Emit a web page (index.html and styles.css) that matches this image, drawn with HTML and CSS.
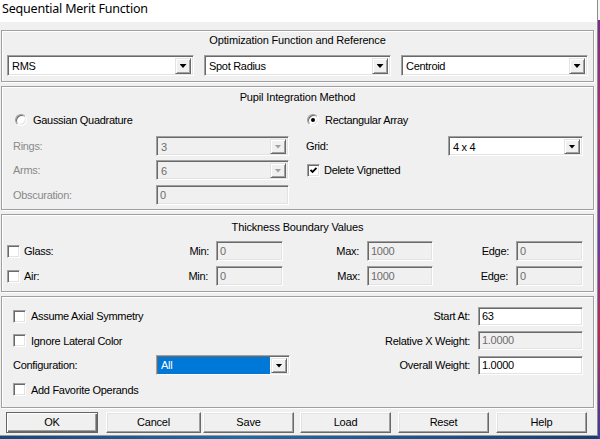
FILE: index.html
```html
<!DOCTYPE html>
<html>
<head>
<meta charset="utf-8">
<title>Sequential Merit Function</title>
<link rel="stylesheet" href="styles.css">
</head>
<body>
<div class="screen">
  <div class="window">
    <div class="titlebar">Sequential Merit Function</div>
    <div class="client">
      <section class="group g1">
        <div class="gtitle">Optimization Function and Reference</div>
        <div class="row3">
          <div class="combo"><span class="val">RMS</span><span class="drop"></span></div>
          <div class="combo"><span class="val">Spot Radius</span><span class="drop"></span></div>
          <div class="combo"><span class="val">Centroid</span><span class="drop"></span></div>
        </div>
      </section>

      <section class="group g2">
        <div class="gtitle">Pupil Integration Method</div>
        <div class="grid">
          <label class="opt span-l"><span class="rb"></span>Gaussian Quadrature</label>
          <label class="opt span-r"><span class="rb on"></span>Rectangular Array</label>

          <span class="lab dis">Rings:</span>
          <div class="combo small disabled"><span class="val">3</span><span class="drop"></span></div>
          <span class="lab c4">Grid:</span>
          <div class="combo small"><span class="val">4 x 4</span><span class="drop"></span></div>

          <span class="lab dis">Arms:</span>
          <div class="combo small disabled"><span class="val">6</span><span class="drop"></span></div>
          <label class="opt span-r"><span class="cb on"><svg viewBox="0 0 7 7" width="7" height="7"><polyline points="0.5,3 2.5,5 6.5,1" fill="none" stroke="#000" stroke-width="1.8"/></svg></span>Delete Vignetted</label>

          <span class="lab dis">Obscuration:</span>
          <div class="tb disabled">0</div>
        </div>
      </section>

      <section class="group g3">
        <div class="gtitle">Thickness Boundary Values</div>
        <div class="grid">
          <label class="opt"><span class="cb"></span>Glass:</label>
          <span class="rlab">Min:</span>
          <div class="tb disabled">0</div>
          <span class="rlab">Max:</span>
          <div class="tb disabled">1000</div>
          <span class="rlab">Edge:</span>
          <div class="tb disabled">0</div>

          <label class="opt"><span class="cb"></span>Air:</label>
          <span class="rlab">Min:</span>
          <div class="tb disabled">0</div>
          <span class="rlab">Max:</span>
          <div class="tb disabled">1000</div>
          <span class="rlab">Edge:</span>
          <div class="tb disabled">0</div>
        </div>
      </section>

      <section class="group g4">
        <div class="grid">
          <label class="opt span-l wide"><span class="cb"></span>Assume Axial Symmetry</label>
          <span class="rlab c3">Start At:</span>
          <div class="tb">63</div>

          <label class="opt span-l wide"><span class="cb"></span>Ignore Lateral Color</label>
          <span class="rlab c3">Relative X Weight:</span>
          <div class="tb disabled">1.0000</div>

          <span class="lab">Configuration:</span>
          <div class="combo small selected"><span class="val">All</span><span class="drop"></span></div>
          <span class="rlab c3">Overall Weight:</span>
          <div class="tb">1.0000</div>

          <label class="opt span-l wide"><span class="cb"></span>Add Favorite Operands</label>
        </div>
      </section>

      <div class="buttons">
        <button class="btn default b-ok">OK</button>
        <button class="btn b-cancel">Cancel</button>
        <button class="btn b-save">Save</button>
        <button class="btn b-load">Load</button>
        <button class="btn b-reset">Reset</button>
        <button class="btn b-help">Help</button>
      </div>
    </div>
  </div>
  <div class="strip"></div>
</div>
</body>
</html>
```

FILE: styles.css
```css
* { box-sizing: border-box; }
html, body { margin: 0; padding: 0; }
body {
  width: 600px;
  height: 439px;
  overflow: hidden;
  background: linear-gradient(90deg, #16497a, #1f6aa8 40%, #124070);
  font-family: "Liberation Sans", Arial, sans-serif;
  font-size: 11px;
  letter-spacing: -0.3px;
  color: #000;
}
.screen { display: flex; height: 439px; }
.window {
  width: 598px;
  height: 436px;
  background: #f0f0f0;
  border-right: 1px solid #8c8c8c;
  border-bottom: 1px solid #9a9a9a;
  display: flex;
  flex-direction: column;
}
.strip {
  width: 2px;
  height: 439px;
  background: linear-gradient(#f4f4f4 0 20px, #7a2a8c 20px, #b8306a 32%, #6a3aa8 55%, #c02850 75%, #3b3b9e 100%);
}
.titlebar {
  height: 22px;
  background: #fff;
  font-family: "Noto Sans", "Open Sans", sans-serif;
  font-size: 12.5px;
  letter-spacing: -0.2px;
  line-height: 18px;
  padding-left: 2px;
  color: #000;
}
.client {
  padding: 8px 0 0 1px;
  display: flex;
  flex-direction: column;
  gap: 4px;
}
.group {
  width: 593px;
  border: 1px solid #a0a0a0;
  box-shadow: inset 1px 1px 0 #fff, 1px 1px 0 #fff;
}
.gtitle { text-align: center; line-height: 13px; letter-spacing: -0.15px; }

/* group 1 */
.g1 { height: 52px; padding-top: 3px; }
.row3 {
  display: grid;
  grid-template-columns: repeat(3, 187px);
  column-gap: 10px;
  margin-top: 8px;
  padding-left: 5px;
}

/* combo box */
.combo {
  height: 21px;
  display: flex;
  align-items: stretch;
  background: #fff;
  border: 1px solid;
  border-color: #a0a0a0 #fff #fff #a0a0a0;
  box-shadow: inset 1px 1px 0 #696969, inset -1px -1px 0 #e3e3e3;
  padding: 2px 2px 1px 2px;
}
.combo.small { height: 20px; }
.combo .val {
  flex: 1;
  padding-left: 2px;
  line-height: 16px;
  white-space: nowrap;
}
.combo .drop {
  width: 16px;
  background: #f0f0f0;
  border: 1px solid;
  border-color: #e3e3e3 #696969 #696969 #e3e3e3;
  box-shadow: inset 1px 1px 0 #fff, inset -1px -1px 0 #a0a0a0;
  display: flex;
  align-items: center;
  justify-content: center;
}
.combo .drop::after {
  content: "";
  width: 7px;
  height: 4px;
  background: #000;
  clip-path: polygon(0 0, 100% 0, 50% 100%);
}
.combo.disabled { background: #f0f0f0; color: #6d6d6d; }
.combo.disabled .drop::after { background: #a0a0a0; }
.combo.selected .val { background: #0078d7; color: #fff; margin: -1px 1px -1px -1px; padding-left: 3px; line-height: 16px; }

/* text box */
.tb {
  height: 20px;
  background: #fff;
  border: 1px solid;
  border-color: #a0a0a0 #fff #fff #a0a0a0;
  box-shadow: inset 1px 1px 0 #696969, inset -1px -1px 0 #e3e3e3;
  padding-left: 3px;
  line-height: 18px;
}
.tb.disabled { background: #f0f0f0; color: #6d6d6d; }

/* check / radio */
.opt { display: flex; align-items: center; white-space: nowrap; }
.cb {
  width: 13px;
  height: 13px;
  flex: none;
  background: #fff;
  border: 1px solid;
  border-color: #a0a0a0 #fff #fff #a0a0a0;
  box-shadow: inset 1px 1px 0 #696969, inset -1px -1px 0 #e3e3e3;
  margin-right: 5px;
  display: flex;
  align-items: center;
  justify-content: center;
}
.rb {
  width: 12px;
  height: 12px;
  flex: none;
  border-radius: 50%;
  background: #fff;
  border: 1px solid;
  border-color: #a0a0a0 #fff #fff #a0a0a0;
  box-shadow: inset 1px 1px 0 #696969, inset -1px -1px 0 #e3e3e3;
  margin: 0 6px 0 2px;
  display: flex;
  align-items: center;
  justify-content: center;
}
.rb.on::after {
  content: "";
  width: 4px;
  height: 4px;
  border-radius: 50%;
  background: #000;
}
.lab.dis { color: #8a8a8a; }

/* group 2 */
.g2 { height: 124px; padding-top: 4px; }
.g2 .grid {
  display: grid;
  grid-template-columns: 143px 133px 17px 142px 135px;
  grid-template-rows: 26px 26px 22px 28px;
  margin-top: 3px;
  padding-left: 11px;
  align-items: center;
}
.g2 .span-l { grid-column: 1 / 3; }
.g2 .span-r { grid-column: 4 / 6; }
.g2 .span-r .rb { margin-left: 1px; }
.g2 .span-r .cb { margin-left: 1px; margin-right: 4px; }
.g2 .c4 { grid-column: 4; }
.g2 .lab:not(.c4) { grid-column: 1; }

/* group 3 */
.g3 { height: 78px; padding-top: 6px; }
.g3 .grid {
  display: grid;
  grid-template-columns: 174px 35px 67px 84px 66px 83px 67px;
  grid-template-rows: 20px 20px;
  row-gap: 5px;
  margin-top: 7px;
  padding-left: 5px;
  align-items: center;
}
.g3 .cb { margin-right: 4px; }
.rlab { text-align: right; padding-right: 7px; white-space: nowrap; }
.g3 .grid .rlab:nth-of-type(2n) { padding-right: 8px; }

/* group 4 */
.g4 { height: 112px; padding-top: 7px; }
.g4 .grid {
  display: grid;
  grid-template-columns: 143px 134px 1fr 105px;
  grid-template-rows: 24px 25px 24px 25px;
  padding-left: 11px;
  padding-right: 10px;
  align-items: center;
}
.g4 .span-l { grid-column: 1 / 3; }
.g4 .lab { grid-column: 1; }
.g4 .c3 { grid-column: 3; padding-right: 8px; }
.g4 .tb { height: 19px; line-height: 17px; }

/* buttons */
.buttons { display: flex; height: 21px; }
.btn {
  height: 21px;
  width: 91px;
  font-family: "Liberation Sans", Arial, sans-serif;
  font-size: 11px;
  letter-spacing: -0.2px;
  color: #000;
  background: #f0f0f0;
  border: 1px solid;
  border-color: #fff #696969 #696969 #fff;
  box-shadow: inset -1px -1px 0 #a0a0a0, inset 1px 1px 0 #e3e3e3;
  padding: 0;
  margin: 0;
  line-height: 17px;
}
.btn.default {
  border: 1px solid #646464;
  box-shadow: inset 1px 1px 0 #fff, inset -1px -1px 0 #696969, inset -2px -2px 0 #a0a0a0;
}
.b-ok { margin-left: 5px; width: 92px; }
.b-cancel { margin-left: 8px; width: 95px; }
.b-save { margin-left: 2px; }
.b-load { margin-left: 6px; }
.b-reset { margin-left: 7px; }
.b-help { margin-left: 7px; }
```
